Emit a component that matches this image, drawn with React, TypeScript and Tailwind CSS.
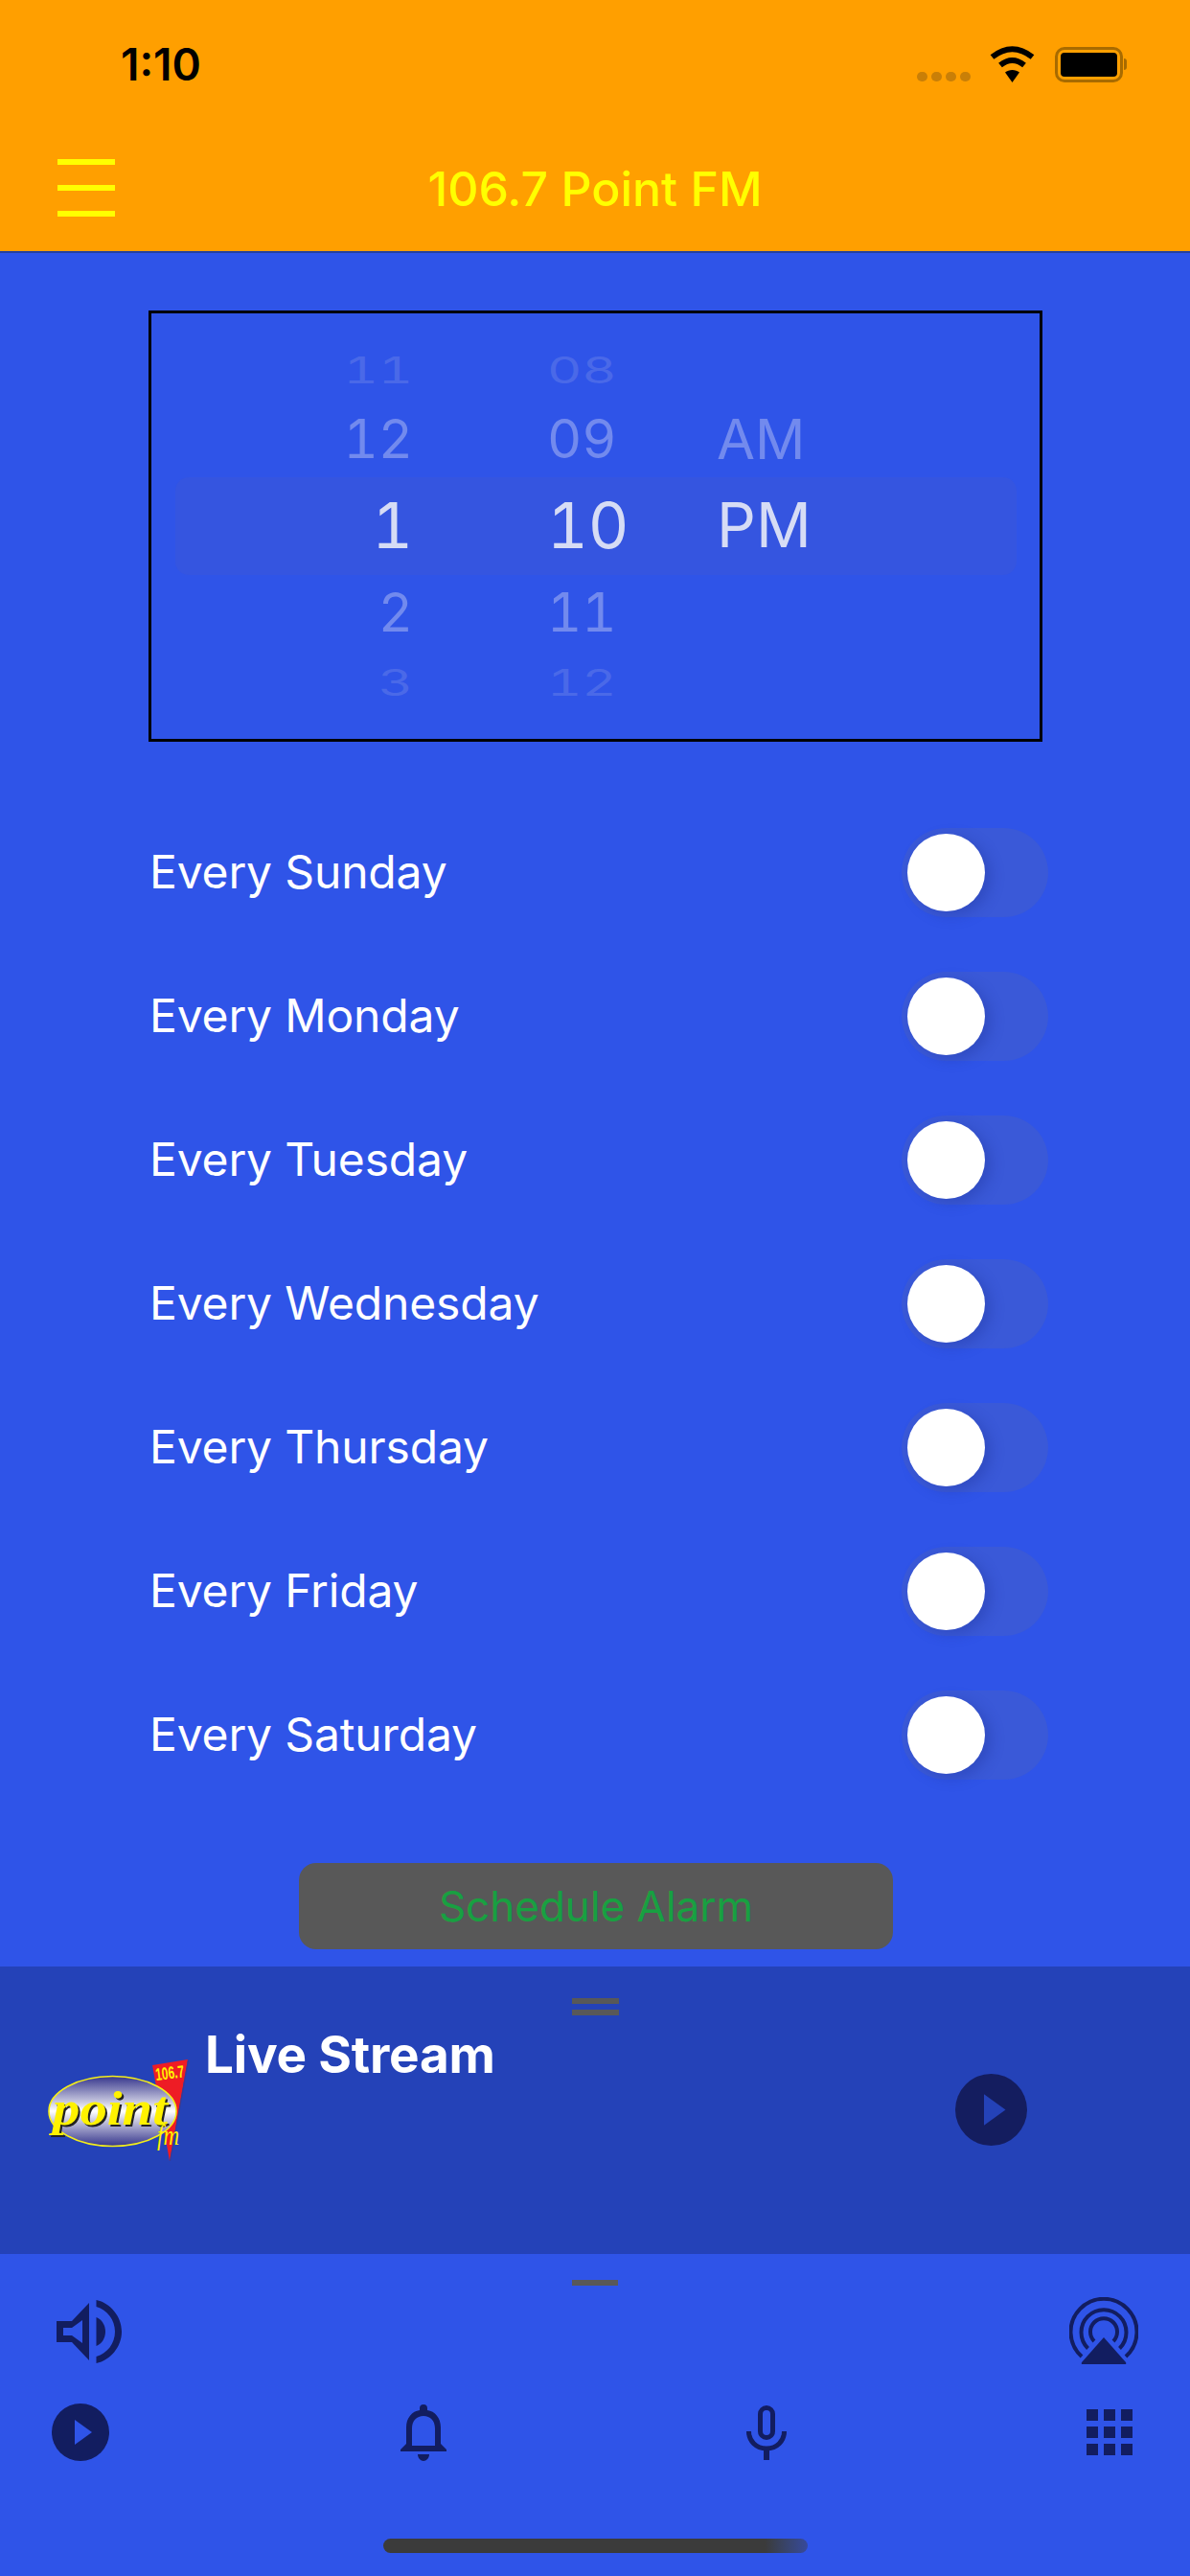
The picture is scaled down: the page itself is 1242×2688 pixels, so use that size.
const days = ['Sunday', 'Monday', 'Tuesday', 'Wednesday', 'Thursday', 'Friday', 'Saturday'];

const rowHeights = ['h-[72px]', 'h-[72px]', 'h-[108px]', 'h-[74px]', 'h-[72px]'];
const rowText = [
  'text-[56px] text-[#4a69e8] scale-y-[0.68]',
  'text-[56px] text-[#728aee]',
  'text-[66px] text-[#d6dcf5]',
  'text-[56px] text-[#728aee]',
  'text-[56px] text-[#4a69e8] scale-y-[0.68]',
];
const ampmText = ['', 'text-[58px] text-[#728aee]', 'text-[64px] text-[#d6dcf5]', '', ''];

function WheelColumn({ items, className, styles = rowText }: { items: string[]; className: string; styles?: string[] }) {
  return (
    <div className={`flex flex-col tabular-nums ${className}`}>
      {items.map((item, i) => (
        <div key={i} className={`flex items-center leading-none ${rowHeights[i]} ${styles[i]}`}>
          {item}
        </div>
      ))}
    </div>
  );
}

function PlayCircle({ size, color, tri }: { size: string; color: string; tri: string }) {
  return (
    <svg viewBox="0 0 60 60" className={size}>
      <circle cx="30" cy="30" r="30" className={color} />
      <path d="M24 17 L42 30 L24 43 Z" className={tri} />
    </svg>
  );
}

function Logo() {
  return (
    <svg viewBox="0 0 146 107" className="w-[146px] h-[107px] overflow-visible">
      <defs>
        <linearGradient id="oval" x1="0" y1="0" x2="0" y2="1">
          <stop offset="0" stopColor="#35358c" />
          <stop offset="0.5" stopColor="#ffffff" />
          <stop offset="1" stopColor="#35358c" />
        </linearGradient>
      </defs>
      <path d="M109 7 L146 1 L127 107 Z" fill="#ee1c25" />
      <path d="M146 1 L147 3 L128 107 L127 107 Z" fill="#3a3a90" />
      <ellipse cx="67.5" cy="55" rx="66.5" ry="36.5" fill="url(#oval)" stroke="#f4ee1a" strokeWidth="1.6" />
      <text x="113" y="23" fontSize="18" fontWeight="700" fill="#fff200" fontFamily="'Liberation Sans', sans-serif" textLength="30" lengthAdjust="spacingAndGlyphs" transform="rotate(-7 113 23)">106.7</text>
      <text x="7" y="71" fontSize="50" fontWeight="700" fontStyle="italic" fill="#222" fontFamily="'Liberation Serif', serif" textLength="120" lengthAdjust="spacingAndGlyphs">point</text>
      <text x="5" y="69" fontSize="50" fontWeight="700" fontStyle="italic" fill="#fff200" fontFamily="'Liberation Serif', serif" textLength="120" lengthAdjust="spacingAndGlyphs">point</text>
      <text x="114" y="90" fontSize="30" fontStyle="italic" fill="#fff200" fontFamily="'Liberation Serif', serif" textLength="23" lengthAdjust="spacingAndGlyphs">fm</text>
    </svg>
  );
}

export default function App() {
  return (
    <div className="w-[1242px] h-[2688px] flex flex-col bg-[#2f54e8] font-[Inter,sans-serif] overflow-hidden">
      {/* Header */}
      <header className="h-[264px] bg-[#ff9f00] border-b-2 border-[#26409f] flex flex-col shrink-0">
        <div className="h-[136px] flex items-center pl-[126px] pr-[66px] pb-[2px]">
          <span className="text-[46px] font-semibold text-black leading-none">1:10</span>
          <div className="ml-auto flex items-end gap-[20px]">
            <div className="flex gap-[4px] mb-[1px]">
              {[0, 1, 2, 3].map((i) => (
                <div key={i} className="w-[11px] h-[10px] rounded-full bg-[#c97f07]" />
              ))}
            </div>
            <svg viewBox="0 0 47 36" className="w-[47px] h-[36px] overflow-visible">
              <path d="M23.5 36 L16 25.5 C20 22 27 22 31 25.5 Z" fill="#000" />
              <path d="M11 18 Q23.5 8 36 18" fill="none" stroke="#000" strokeWidth="6" />
              <path d="M2.5 9.5 Q23.5 -7 44.5 9.5" fill="none" stroke="#000" strokeWidth="6" />
            </svg>
            <div className="flex items-center">
              <div className="w-[71px] h-[37px] ml-[1px] rounded-[10px] border-[3px] border-[#a86b00] p-[3px]">
                <div className="w-full h-full rounded-[4px] bg-black" />
              </div>
              <div className="w-[3px] h-[12px] ml-[1px] rounded-r-[3px] bg-[#a86b00]" />
            </div>
          </div>
        </div>
        <div className="flex-1 flex items-center relative pb-[4px]">
          <div className="absolute left-[60px] top-[30px] flex flex-col gap-[21px]">
            <div className="w-[60px] h-[6px] bg-[#ffff00]" />
            <div className="w-[60px] h-[6px] bg-[#ffff00]" />
            <div className="w-[60px] h-[6px] bg-[#ffff00]" />
          </div>
          <span className="mx-auto text-[50px] font-medium text-[#ffff00] leading-none">106.7 Point FM</span>
        </div>
      </header>

      {/* Time picker */}
      <main className="flex-1 flex flex-col pt-[60px]">
        <div className="relative ml-[155px] w-[933px] h-[450px] border-[3px] border-black pt-[23px] flex">
          <div className="absolute left-[25px] right-[24px] top-[171px] h-[102px] rounded-[14px] bg-[#3555e0]" />
          <WheelColumn items={['11', '12', '1', '2', '3']} className="relative w-[273px] items-end" />
          <WheelColumn items={['08', '09', '10', '11', '12']} className="relative ml-[140px] w-[177px]" />
          <WheelColumn items={['', 'AM', 'PM', '', '']} className="relative" styles={ampmText} />
        </div>

        <div className="mt-[61px] flex flex-col pl-[156px] pr-[148px]">
          {days.map((day) => (
            <div key={day} className="h-[150px] flex items-center justify-between">
              <span className="text-[48px] text-white leading-none tracking-[-0.15px]">Every {day}</span>
              <div className="w-[153px] h-[93px] rounded-full bg-[#3a59d8] p-[6px]">
                <div className="w-[81px] h-[81px] rounded-full bg-white shadow-[6px_4px_14px_rgba(30,50,150,0.35)]" />
              </div>
            </div>
          ))}
        </div>

        <button className="mt-[59px] ml-[312px] w-[620px] h-[90px] rounded-[18px] bg-[#585858] text-[44px] text-[#18a041] leading-none">
          Schedule Alarm
        </button>
      </main>

      {/* Mini player */}
      <section className="mt-[18px] h-[300px] bg-[#2442b8] flex flex-col shrink-0">
        <div className="pt-[33px] flex flex-col items-center gap-[6px]">
          <div className="w-[49px] h-[6px] bg-[#585858]" />
          <div className="w-[49px] h-[6px] bg-[#585858]" />
        </div>
        <div className="flex items-start pl-[50px] pr-[170px]">
          <div className="mt-[45px]">
            <Logo />
          </div>
          <span className="ml-[18px] mt-[11px] text-[53px] font-bold text-white leading-[60px] tracking-[-0.2px]">Live Stream</span>
          <div className="ml-auto mt-[61px]">
            <PlayCircle size="w-[75px] h-[75px] block" color="fill-[#141d5f]" tri="fill-[#2442b8]" />
          </div>
        </div>
      </section>

      {/* Bottom controls */}
      <section className="h-[336px] flex flex-col items-stretch shrink-0">
        <div className="pt-[27px] flex justify-center">
          <div className="w-[48px] h-[6px] bg-[#585858]" />
        </div>
        <div className="mt-[12px] flex justify-between items-start pl-[59px] pr-[54px]">
          <svg viewBox="0 0 68 66" className="w-[68px] h-[66px] mt-[3px] fill-[#121d60]">
            <path fillRule="evenodd" d="M0 22 H16 L34 3 V63 L16 44 H0 Z M7 29 V37 H16 L27 45 V21 L16 29 Z" />
            <path d="M41.5 18 C47 20 51 26 51 33 C51 40 47 46 41.5 48 Z" />
            <path d="M41.5 0 C56 3 68 17 68 33 C68 49 56 63 41.5 66 V59 C53 56 61 45 61 33 C61 21 53 10 41.5 7 Z" />
          </svg>
          <svg viewBox="0 0 72 70" className="w-[72px] h-[70px]">
            <path d="M13 62 A34.5 34.5 0 1 1 59 62 M19.5 53.5 A23.5 23.5 0 1 1 52.5 53.5 M26 46 A14 14 0 1 1 46 46" fill="none" stroke="#121d60" strokeWidth="4" />
            <path d="M36 42 L59 68 Q60 70 58 70 H14 Q12 70 13 68 Z" fill="#121d60" />
          </svg>
        </div>
        <div className="mt-[41px] flex justify-between items-center px-[54px]">
          <PlayCircle size="w-[60px] h-[60px] block" color="fill-[#121d60]" tri="fill-[#2f54e8]" />
          <div className="w-[60px] flex justify-center">
            <svg viewBox="0 0 48 59" className="w-[48px] h-[59px] fill-[#121d60]">
              <path fillRule="evenodd" d="M20 6 V4 a4 4 0 0 1 8 0 V6 C36 7 42 14 42 24 V41 L48 47 V49 H0 V47 L6 41 V24 C6 14 12 7 20 6 Z M24 12 C17 12 12 17 12 25 V43 H36 V25 C36 17 31 12 24 12 Z" />
              <path d="M18 52 H30 C30 56 27 59 24 59 C21 59 18 56 18 52 Z" />
            </svg>
          </div>
          <div className="w-[60px] flex justify-center">
            <svg viewBox="0 0 42 57" className="w-[42px] h-[57px]" fill="none" stroke="#121d60">
              <rect x="14.5" y="2.5" width="13" height="31" rx="6.5" strokeWidth="5" />
              <path d="M2.5 27 C2.5 37 10 45 21 45 C32 45 39.5 37 39.5 27" strokeWidth="5" />
              <path d="M21 45 V57" strokeWidth="6" />
            </svg>
          </div>
          <div className="w-[60px] flex justify-center">
            <svg viewBox="0 0 48 48" className="w-[48px] h-[48px] fill-[#121d60]">
              {[0, 18, 36].map((y) =>
                [0, 18, 36].map((x) => <rect key={`${x}-${y}`} x={x} y={y} width="12" height="12" />),
              )}
            </svg>
          </div>
        </div>
        <div className="mt-[81px] flex justify-center">
          <div className="w-[443px] h-[15px] rounded-full bg-gradient-to-r from-[#3b3b3b] from-90% to-[#37499c]" />
        </div>
      </section>
    </div>
  );
}
